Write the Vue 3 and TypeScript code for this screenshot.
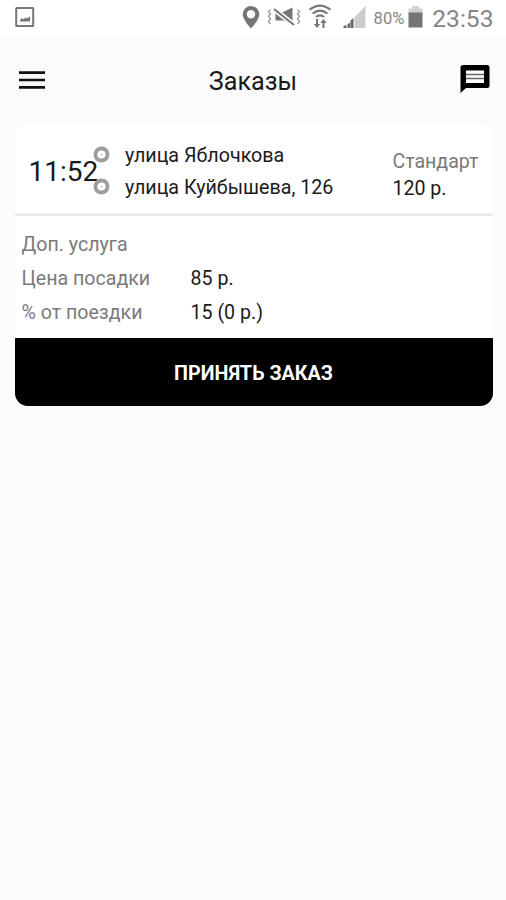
<script setup lang="ts">
interface Fee {
  label: string
  value: string
}

const stops: string[] = ['улица Яблочкова', 'улица Куйбышева, 126']

const fees: Fee[] = [
  { label: 'Доп. услуга', value: '' },
  { label: 'Цена посадки', value: '85 р.' },
  { label: '% от поездки', value: '15 (0 р.)' },
]
</script>

<template>
  <div class="screen">
    <div class="status">
      <svg class="picture" width="20" height="22" viewBox="0 0 20 22">
        <rect x="1.200" y="2" width="17" height="18" rx=".5" fill="#fff" stroke="#777" stroke-width="2" />
        <path d="M4.500 15.500 6.500 12l2 1.200 2-1.700 1.300 1L15 10.500V15.500Z" fill="#777" />
      </svg>
      <div class="tray">
        <svg class="pin" width="18" height="24" viewBox="0 0 18 24">
          <path fill="#757575" fill-rule="evenodd" d="M9 0A8.300 8.300 0 0 0 .7 8.300C.7 14 9 22.500 9 22.500s8.300-8.500 8.300-14.200A8.300 8.300 0 0 0 9 0Zm0 4.100a4.200 4.200 0 1 1 0 8.400 4.200 4.200 0 0 1 0-8.400Z" />
        </svg>
        <svg class="mute" width="34" height="22" viewBox="0 0 34 22">
          <g fill="none" stroke="#999" stroke-width="1.300">
            <path d="M3.500 3.500 1.500 5.500 3.500 8 1.500 10.500 3.500 13 1.500 15.500 3.500 18" />
            <path d="M30.500 3.500 32.500 5.500 30.500 8 32.500 10.500 30.500 13 32.500 15.500 30.500 18" />
          </g>
          <path fill="#777" d="M8.500 6.500H15L25.500 1.500V18.500L16 14.500H8.500Z" />
          <path d="M7 3 27 19" stroke="#fff" stroke-width="5" />
          <path d="M7 3 27 19" stroke="#777" stroke-width="2.200" />
        </svg>
        <svg class="wifi" width="24" height="25" viewBox="0 0 24 25">
          <g fill="none" stroke="#777" stroke-width="2.100">
            <path d="M1.500 5.800Q12-2.700 22.500 5.800" />
            <path d="M4.700 9.500Q12 3.600 19.300 9.500" />
            <path d="M8 13Q12 9.700 16 13" />
          </g>
          <path fill="#777" d="M8 15h2v5h2.200L9 24 5.800 20H8ZM14.500 24v-5h-2.200l3.200-4 3.200 4h-2.200v5Z" />
        </svg>
        <svg class="signal" width="23" height="23" viewBox="0 0 23 23">
          <path d="M11.500 11.500 22.500 0V22H11.500Z" fill="#ccc" />
          <path d="M.5 22v-2l3-1v3ZM4.500 22v-3.500l2.500-2V22ZM7.500 22V14.500l3-2.500V22Z" fill="#666" />
        </svg>
        <span class="percent">80%</span>
        <svg class="battery" width="15" height="22" viewBox="0 0 15 22">
          <path d="M4 0h7v2.500h3.500V8H.5V2.500H4Z" fill="#d2d2d2" />
          <path d="M.5 6.500h14V21.500H.5Z" fill="#757575" />
        </svg>
        <span class="clock">23:53</span>
      </div>
    </div>

    <header class="bar">
      <svg class="menu" width="28" height="20" viewBox="0 0 28 20">
        <path d="M1 2.700H27M1 10H27M1 17.300H27" stroke="#111" stroke-width="2.700" />
      </svg>
      <h1 class="title">Заказы</h1>
      <svg class="chat" width="30" height="30" viewBox="0 0 30 30">
        <path d="M3 1H27Q29.500 1 29.500 3.500V21.500Q29.500 24 27 24H6L.5 29V3.500Q.5 1 3 1Z" fill="#000" />
        <path d="M6 6.500H24V19H6Z" fill="#fff" />
        <path d="M6 10.500H24M6 14.500H24" stroke="#666" stroke-width="1.400" />
      </svg>
    </header>

    <main class="card">
      <section class="route">
        <span class="time">11:52</span>
        <ul class="stops">
          <li v-for="stop in stops" :key="stop" class="stop">
            <svg class="dot" width="17" height="17" viewBox="0 0 17 17">
              <circle cx="8.500" cy="8.500" r="6" fill="#fff" stroke="#9e9e9e" stroke-width="4" />
              <circle cx="8.500" cy="8.500" r=".8" fill="#aaa" />
            </svg>
            <span class="street">{{ stop }}</span>
          </li>
        </ul>
        <div class="tariff">
          <span class="plan">Стандарт</span>
          <span class="price">120 р.</span>
        </div>
      </section>
      <dl class="fees">
        <div v-for="fee in fees" :key="fee.label" class="fee">
          <dt>{{ fee.label }}</dt>
          <dd>{{ fee.value }}</dd>
        </div>
      </dl>
      <button class="accept" type="button">ПРИНЯТЬ ЗАКАЗ</button>
    </main>
  </div>
</template>

<style>
body {
  background: #fbfbfb;
}
</style>

<style scoped>
.screen {
  min-height: 900px;
  background: #fbfbfb;
  color: #1a1a1a;
  font-family: Roboto, 'Liberation Sans', sans-serif;
}
.status {
  display: flex;
  justify-content: space-between;
  align-items: flex-start;
  box-sizing: border-box;
  height: 36px;
  padding: 6px 12.5px 0 15px;
  background: #fff;
}
.status svg,
.bar svg {
  flex: none;
  display: block;
}
.tray {
  display: flex;
  align-items: flex-start;
  color: #858585;
}
.pin {
  margin-right: 7px;
}
.mute {
  margin-right: 7px;
}
.wifi {
  margin-top: -2px;
  margin-right: 11px;
}
.percent {
  margin: 3px 4px 0 8px;
  font-size: 16.5px;
  line-height: 20px;
}
.battery {
  margin-right: 9px;
}
.clock {
  font-size: 24.6px;
  line-height: 26px;
}
.bar {
  display: flex;
  align-items: center;
  justify-content: space-between;
  height: 89px;
  padding: 0 16px 0 18px;
}
.menu {
  margin-bottom: 1px;
}
.chat {
  margin-bottom: 4px;
}
.title {
  margin: 0;
  padding-top: 2px;
  font-size: 25.2px;
  line-height: 30px;
  font-weight: 400;
}
.card {
  margin: 0 13.5px 0 14.5px;
  overflow: hidden;
  border-radius: 10px 10px 13px 13px;
  background: #fff;
}
.route {
  display: flex;
  align-items: center;
  height: 88px;
  padding: 0 14px;
  border-bottom: 3px solid #ececec;
}
.time {
  flex: none;
  width: 64px;
  padding-top: 5px;
  font-size: 28px;
  line-height: 32px;
  white-space: nowrap;
}
.stops {
  flex: 1;
  margin: 0;
  padding: 2px 0 0;
  list-style: none;
}
.stop {
  display: flex;
  align-items: center;
  gap: 15.5px;
  height: 32px;
}
.dot {
  position: relative;
  flex: none;
}
.street {
  padding-top: 4px;
  font-size: 19.7px;
  line-height: 24px;
  white-space: nowrap;
}
.tariff {
  display: flex;
  flex-direction: column;
  padding-top: 11px;
  font-size: 19.6px;
  line-height: 27px;
}
.plan {
  color: #7a7a7a;
}
.fees {
  box-sizing: border-box;
  height: 122px;
  margin: 0;
  padding: 12px 7px 0;
  font-size: 19.6px;
}
.fee {
  display: grid;
  grid-template-columns: 169px 1fr;
  height: 34px;
  line-height: 34px;
}
.fee dt {
  color: #7a7a7a;
}
.fee dd {
  margin: 0;
}
.accept {
  display: block;
  width: 100%;
  height: 68px;
  padding: 4px 0 0;
  border: 0;
  background: #000;
  color: #fff;
  font: 700 19.7px/24px Roboto, 'Liberation Sans', sans-serif;
}
</style>
